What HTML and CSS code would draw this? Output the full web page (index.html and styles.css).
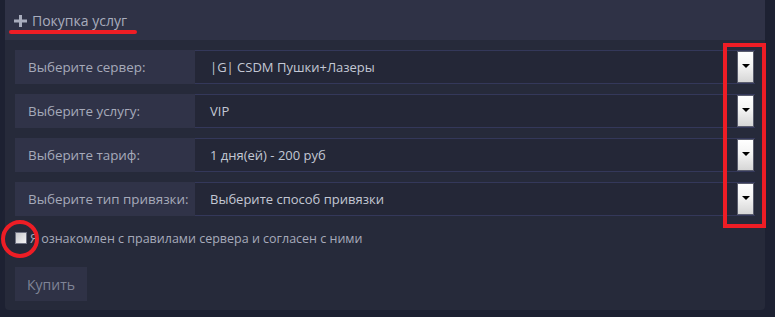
FILE: index.html
```html
<!DOCTYPE html>
<html>
    <head>
        <title>Покупка услуг</title>
        <link rel="stylesheet" href="styles.css">
    </head>
    <body>
        <div class="panel">
            <div class="panel-head">
                <span class="head-title">
                    <svg class="plus" width="13" height="12" viewBox="0 0 13 12"><path d="M5 0h3v4.5h5v3H8V12H5V7.5H0v-3h5z" fill="#a9adbd"/></svg>
                    Покупка услуг
                </span>
                <span class="mark-line"></span>
            </div>
            <form class="panel-body">
                <div class="field">
                    <div class="field-label">Выберите сервер:</div>
                    <div class="field-select"><span>|G| CSDM Пушки+Лазеры</span><span class="arrow"></span></div>
                </div>
                <div class="field">
                    <div class="field-label">Выберите услугу:</div>
                    <div class="field-select"><span>VIP</span><span class="arrow"></span></div>
                </div>
                <div class="field">
                    <div class="field-label">Выберите тариф:</div>
                    <div class="field-select"><span>1 дня(ей) - 200 руб</span><span class="arrow"></span></div>
                </div>
                <div class="field">
                    <div class="field-label">Выберите тип привязки:</div>
                    <div class="field-select"><span>Выберите способ привязки</span><span class="arrow"></span></div>
                </div>
                <label class="agree"><span class="check"></span>Я ознакомлен с правилами сервера и согласен с ними</label>
                <div><button type="button" class="buy">Купить</button></div>
            </form>
            <div class="mark-rect"></div>
            <div class="mark-circle"></div>
        </div>
    </body>
</html>
```

FILE: styles.css
```css
body {
    margin: 0;
    background-color: #1d2132;
    font-family: "Open Sans", "Noto Sans", sans-serif;
    font-size: 13px;
}
.panel {
    position: relative;
    width: 760px;
    margin-left: 5px;
    background-color: #262a3a;
    border-radius: 0 0 4px 4px;
}
.panel-head {
    position: relative;
    height: 40px;
    padding-left: 9px;
    display: flex;
    align-items: center;
    background-color: #2f3246;
    color: #a9adbd;
    font-size: 14px;
}
.head-title {
    display: flex;
    align-items: center;
    gap: 5px;
    margin-top: 1px;
}
.mark-line {
    position: absolute;
    left: 4px;
    top: 30px;
    width: 128px;
    height: 4px;
    border-radius: 2px;
    background-color: #ee1d25;
}
.panel-body {
    padding: 10px 10px 9px;
    display: flex;
    flex-direction: column;
}
.field {
    display: flex;
    height: 34px;
    margin-bottom: 10px;
}
.field-label {
    width: 167px;
    padding-left: 13px;
    display: flex;
    align-items: center;
    background-color: #303348;
    color: #a6aaba;
    font-size: 13.4px;
}
.field-select {
    flex: 1;
    display: flex;
    align-items: center;
    justify-content: space-between;
    padding-left: 15px;
    padding-right: 1px;
    background-color: #242737;
    border: 1px solid #34385a;
    border-width: 1px 0;
    color: #c3c7d4;
}
.arrow {
    position: relative;
    width: 15px;
    height: 30px;
    border: 1px solid #5a5d6e;
    background: linear-gradient(#ffffff, #f4f4f4 45%, #d6d6d6);
}
.arrow::after {
    content: "";
    position: absolute;
    left: 4px;
    top: 12px;
    border-left: 4px solid transparent;
    border-right: 4px solid transparent;
    border-top: 4px solid #000;
}
.agree {
    display: flex;
    align-items: center;
    gap: 3px;
    margin-top: 5px;
    height: 14px;
    color: #a6aaba;
    font-size: 12.5px;
}
.check {
    width: 10px;
    height: 10px;
    border: 1px solid #707384;
    background: linear-gradient(135deg, #c8c8cc, #f4f4f6);
}
.buy {
    margin-top: 22px;
    width: 72px;
    height: 34px;
    border: none;
    background-color: #2f3246;
    color: #7f8496;
    font-family: inherit;
    font-size: 14px;
    padding: 0;
}
.mark-rect {
    position: absolute;
    left: 718px;
    top: 43px;
    width: 35px;
    height: 177px;
    border: 4px solid #ee1d25;
}
.mark-circle {
    position: absolute;
    left: -4px;
    top: 220px;
    width: 30px;
    height: 30px;
    border: 4px solid #ee1d25;
    border-radius: 50%;
}
```
